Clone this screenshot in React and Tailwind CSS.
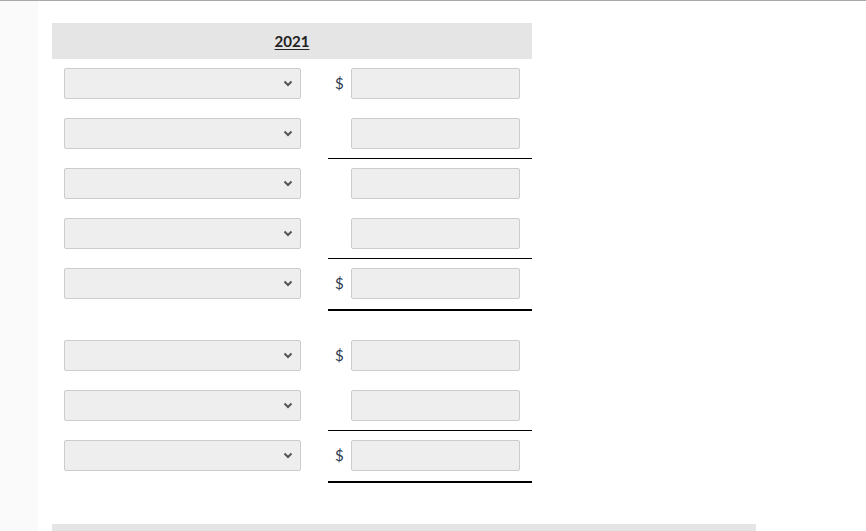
import { Fragment } from "react";

/* ── Select with chevron ── */
const Dropdown = () => (
  <div className="ml-3 w-[237px] h-[31px] bg-[#eeeeee] border border-[#cccccc] rounded-[2px] flex items-center justify-end pr-[7px]">
    <svg width="10" height="7" viewBox="0 0 10 7">
      <path d="M1.5 1.5 L5 5 L8.5 1.5" fill="none" stroke="#555" strokeWidth="2" />
    </svg>
  </div>
);

/* ── Amount cell ── */
const Amount = ({ dollar }) => (
  <div className="flex items-center h-[31px]">
    <span className="w-[23px] pl-[7px] text-[15px] text-[#2b3a4f]">{dollar ? "$" : ""}</span>
    <div className="w-[169px] h-[31px] bg-[#eeeeee] border border-[#cccccc] rounded-[2px]" />
  </div>
);

const GROUP_A = [
  { dollar: true, line: "", h: "h-[50px]" },
  { dollar: false, line: "border-b border-black", h: "h-[50px]" },
  { dollar: false, line: "", h: "h-[50px]" },
  { dollar: false, line: "border-b border-black", h: "h-[50px]" },
  { dollar: true, line: "border-b-2 border-black", h: "h-[52px]" },
];

const GROUP_B = [
  { dollar: true, line: "", h: "h-[50px]" },
  { dollar: false, line: "border-b border-black", h: "h-[50px]" },
  { dollar: true, line: "border-b-2 border-black", h: "h-[52px]" },
];

const Row = ({ dollar, line, h }) => (
  <div className={`grid grid-cols-[276px_204px] ${h}`}>
    <div className="pt-[9px]">
      <Dropdown />
    </div>
    <div className={`pt-[9px] ${line}`}>
      <Amount dollar={dollar} />
    </div>
  </div>
);

export default function App() {
  return (
    <div
      className="w-[866px] h-[531px] overflow-hidden bg-white border-t border-[#a8a8a8] flex"
      style={{ fontFamily: "Lato, 'Liberation Sans', sans-serif" }}
    >
      {/* left strip */}
      <div className="w-[38px] shrink-0 bg-[#fafafa]" />

      <div className="pl-[14px] pt-[22px] flex-1">
        <div className="w-[480px]">
          {/* header */}
          <div className="h-[36px] bg-[#e5e5e5] flex items-center justify-center">
            <span className="font-bold text-[15px] text-[#222] underline underline-offset-2">2021</span>
          </div>

          {GROUP_A.map((r, i) => (
            <Row key={i} {...r} />
          ))}

          <div className="h-[20px]" />

          {GROUP_B.map((r, i) => (
            <Row key={i} {...r} />
          ))}
        </div>

        {/* bottom bar */}
        <div className="mt-[41px] w-[704px] h-[10px] bg-[#e5e5e5]" />
      </div>
    </div>
  );
}
